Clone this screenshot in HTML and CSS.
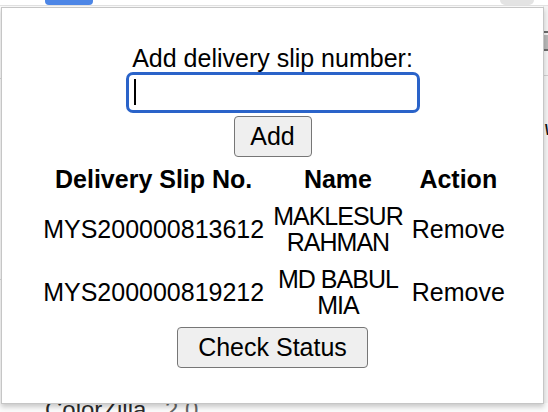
FILE: index.html
```html
<!DOCTYPE html>
<html lang="en">
<head>
<meta charset="utf-8">
<title>Delivery slip tracker</title>
<link rel="stylesheet" href="styles.css">
</head>
<body>
<div class="page">
  <header class="topbar">
    <span class="badge">New</span>
    <span class="avatar"></span>
  </header>
  <div class="middle">
    <div class="edge-left">
      <span class="glyph-e">e</span>
      <i class="rule rl1"></i>
      <i class="rule rl2"></i>
    </div>
    <div class="under"></div>
    <div class="edge-right">
      <i class="sb-line"></i>
      <i class="sb-thumb"></i>
      <i class="sb-line"></i>
      <i class="rule rr1"></i>
      <span class="glyph-w">v</span>
    </div>
  </div>
  <footer class="ext">ColorZilla <span class="ver">2.0</span></footer>
</div>

<div class="popup">
  <label class="prompt" for="slip">Add delivery slip number:</label>
  <span class="field"><input id="slip" type="text"><i class="caret"></i></span>
  <button class="btn add" type="button">Add</button>
  <table class="slips">
    <thead>
      <tr><th>Delivery Slip No.</th><th class="name-col">Name</th><th>Action</th></tr>
    </thead>
    <tbody>
      <tr><td>MYS200000813612</td><td class="name">MAKLESUR RAHMAN</td><td>Remove</td></tr>
      <tr><td>MYS200000819212</td><td class="name">MD BABUL MIA</td><td>Remove</td></tr>
    </tbody>
  </table>
  <button class="btn check" type="button">Check Status</button>
</div>
</body>
</html>
```

FILE: styles.css
```css
html, body {
  margin: 0;
  padding: 0;
}
body {
  width: 548px;
  height: 412px;
  overflow: hidden;
  background: #ffffff;
  font-family: "Liberation Sans", Arial, Helvetica, sans-serif;
  color: #000;
}

/* background page (mostly hidden under the popup) */
.page {
  height: 412px;
  display: flex;
  flex-direction: column;
  background: #fbfbfb;
  overflow: hidden;
}
.topbar {
  height: 5px;
  flex: none;
  display: flex;
  align-items: flex-start;
  border-bottom: 1px solid #e2e2e2;
  background: #ffffff;
}
.badge {
  margin-left: 45px;
  width: 48px;
  height: 5px;
  background: #4d86e6;
  border-radius: 0 0 4px 4px;
  color: transparent;
  font-size: 1px;
  overflow: hidden;
}
.avatar {
  margin-left: auto;
  margin-right: 14px;
  width: 34px;
  height: 5px;
  background: #e3e3e3;
  border-radius: 0 0 17px 17px;
}
.middle {
  flex: 1;
  display: flex;
}
.edge-left {
  width: 1px;
  display: flex;
  flex-direction: column;
  overflow: visible;
}
.glyph-e {
  margin-top: 30px;
  margin-left: -12px;
  font-size: 20px;
  line-height: 16px;
  color: #222;
}
.rule {
  display: block;
  height: 1px;
  background: #d8d8d8;
}
.rl1 { margin-top: 26px; width: 1px; }
.rl2 { margin-top: 200px; width: 1px; }
.under { flex: 1; }
.edge-right {
  width: 4px;
  display: flex;
  flex-direction: column;
  background: #f3f3f3;
  border-left: 1px solid #e8e8e8;
}
.sb-line {
  display: block;
  height: 2px;
  margin-top: 25px;
  background: #6a6a6a;
}
.sb-thumb {
  display: block;
  height: 14px;
  margin-top: 2px;
  background: #b8b8b8;
}
.edge-right .sb-line + .sb-thumb + .sb-line { margin-top: 0; }
.rr1 { margin-top: 24px; background: #cfcfcf; }
.glyph-w {
  margin-top: 44px;
  font-size: 20px;
  line-height: 16px;
  color: #111;
  font-style: italic;
}
.ext {
  flex: none;
  height: 9px;
  padding-left: 45px;
  font-size: 24px;
  line-height: 14px;
  color: #2b2b2b;
  overflow: hidden;
}
.ver {
  margin-left: 12px;
  color: #666;
}

/* popup window */
.popup {
  position: absolute;
  left: 1px;
  top: 7px;
  width: 543px;
  height: 397px;
  box-sizing: border-box;
  border: 1px solid #c6c6c6;
  background: #ffffff;
  box-shadow: 0 3px 5px rgba(0, 0, 0, 0.2);
  display: flex;
  flex-direction: column;
  align-items: center;
  padding-top: 36px;
  font-size: 25px;
}
.prompt {
  display: block;
  line-height: 28px;
}
.field {
  display: block;
  position: relative;
  height: 41px;
}
.field input {
  display: block;
  width: 294px;
  height: 41px;
  box-sizing: border-box;
  margin: 0;
  padding: 0;
  border: 3px solid #2a63c9;
  border-radius: 7px;
  outline: none;
  background: #fff;
  font: inherit;
}
.caret {
  position: absolute;
  left: 8px;
  top: 7px;
  width: 2px;
  height: 26px;
  background: #000;
}
.btn {
  box-sizing: border-box;
  height: 41px;
  margin: 0;
  padding: 0;
  border: 1px solid #767676;
  border-radius: 4px;
  background: #efefef;
  color: #000;
  font-family: inherit;
  font-size: 25px;
  line-height: 1;
}
.add {
  margin-top: 3px;
  width: 78px;
}
.slips {
  margin-top: 2px;
  margin-left: 3px;
  border-spacing: 3px;
  line-height: 26px;
  font-size: 25px;
}
.slips th,
.slips td {
  padding: 4px 3px;
  text-align: center;
  vertical-align: middle;
}
.slips th { font-weight: bold; }
.name-col { width: 1px; }
.name { letter-spacing: -1px; }
.check {
  margin-top: 2px;
  width: 191px;
}
```
